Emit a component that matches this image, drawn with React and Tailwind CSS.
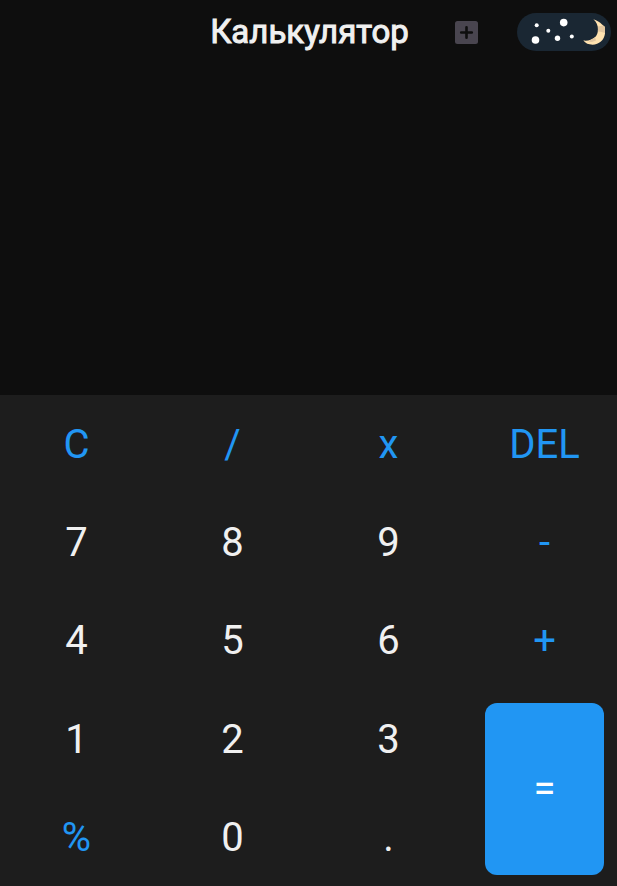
const keys = [
  ["C", "op"], ["/", "op"], ["x", "op"], ["DEL", "op"],
  ["7", "digit"], ["8", "digit"], ["9", "digit"], ["-", "op"],
  ["4", "digit"], ["5", "digit"], ["6", "digit"], ["+", "op"],
  ["1", "digit"], ["2", "digit"], ["3", "digit"], ["=", "equals"],
  ["%", "op"], ["0", "digit"], [".", "digit"],
];

const styles = {
  op: "text-[#2196f3]",
  digit: "text-[#f0f0f0]",
  equals: "row-span-2 rounded-xl bg-[#2196f3] text-white",
};

function AddIcon() {
  return (
    <svg viewBox="0 0 23 23" className="size-[23px]" aria-hidden="true">
      <rect width="23" height="23" rx="2.5" fill="#49454f" />
      <path d="M11.5 6.2v10.6M6.2 11.5h10.6" stroke="#0e0e0e" strokeWidth="2.6" strokeLinecap="round" />
    </svg>
  );
}

function NightSwitch() {
  return (
    <svg viewBox="0 0 94 38" className="h-[38px] w-[94px]" aria-hidden="true">
      <rect width="94" height="38" rx="19" fill="#1a2733" />
      <g fill="#ffffff">
        <circle cx="19.7" cy="12.2" r="2" />
        <circle cx="46.7" cy="9.6" r="3.8" />
        <circle cx="31.3" cy="17.8" r="2" />
        <circle cx="18.5" cy="27" r="3.8" />
        <circle cx="40.5" cy="25.2" r="2.7" />
        <circle cx="54.8" cy="23.4" r="2" />
      </g>
      <path d="M76.3 6.2C80 7.2 83 9.2 84.8 11.2L88 14V20.5C87.3 27 82 31.7 75.5 31.7C71.5 31.7 68.5 30.5 66.3 27.6C75.5 28.5 81 23.5 81 16.5C81 12 79.3 8.7 76.3 6.2Z" fill="#ffe2b0" />
      <path d="M81 13.5L86 12.4L88 14V20L83.5 18.8L80.8 18.6ZM72.5 27.4L78 24.3L79 27.5L75 29L72 28.8Z" fill="#e3c7a0" />
    </svg>
  );
}

export default function App() {
  return (
    <div className="flex min-h-screen flex-col bg-[#0e0e0e] font-['Roboto',sans-serif]">
      <header className="grid h-16 grid-cols-[1fr_auto_1fr] items-center pr-1.5 pl-2">
        <span />
        <h1 className="text-[33px] leading-10 font-normal text-[#f0f0f0] [-webkit-text-stroke:1px_#f0f0f0]">
          Калькулятор
        </h1>
        <div className="flex items-center justify-end gap-[39px]">
          <button type="button" aria-label="Добавить">
            <AddIcon />
          </button>
          <button type="button" role="switch" aria-checked="true" aria-label="Тёмная тема">
            <NightSwitch />
          </button>
        </div>
      </header>
      <output className="block flex-1" aria-label="Результат" />
      <main className="grid h-[491px] grid-cols-4 grid-rows-5 gap-x-[37px] gap-y-[25px] bg-[#1d1d1d] pt-[13px] pr-[13px] pb-[11px] pl-[17px]">
        {keys.map(([label, kind]) => (
          <button key={label} type="button" className={`text-[40px] leading-12 ${styles[kind]}`}>
            {label}
          </button>
        ))}
      </main>
    </div>
  );
}
